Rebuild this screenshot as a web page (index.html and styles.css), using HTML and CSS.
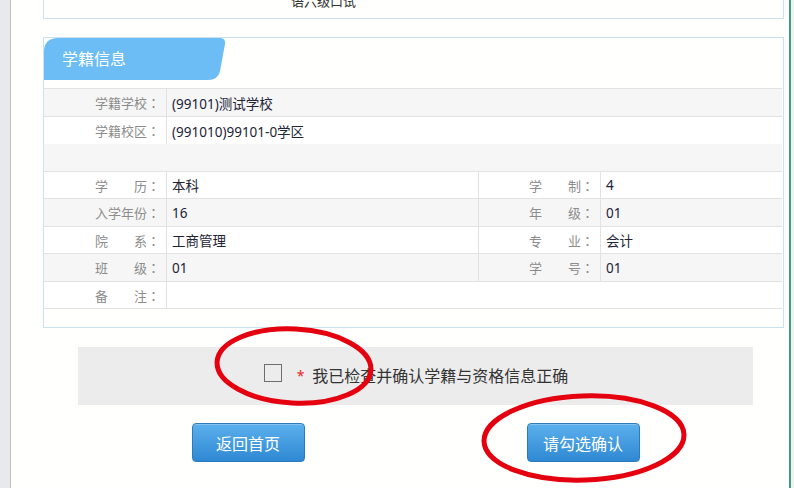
FILE: index.html
```html
<!DOCTYPE html>
<html lang="zh-CN">
<head>
<meta charset="utf-8">
<title>学籍信息确认</title>
<link rel="stylesheet" href="styles.css">
</head>
<body>
<div class="page">
  <div class="side-left"></div>
  <main class="content">
    <div class="prev-box">
      <div class="prev-text">语六级口试</div>
    </div>

    <section class="card">
      <div class="tab">学籍信息</div>
      <div class="info">
        <div class="row gray">
          <div class="lbl">学籍学校<span class="colon">：</span></div>
          <div class="val span3">(99101)测试学校</div>
        </div>
        <div class="row no-line">
          <div class="lbl">学籍校区<span class="colon">：</span></div>
          <div class="val span3">(991010)99101-0学区</div>
        </div>
        <div class="row gray blank"></div>
        <div class="row">
          <div class="lbl">学　　历<span class="colon">：</span></div>
          <div class="val">本科</div>
          <div class="lbl lbl2">学　　制<span class="colon">：</span></div>
          <div class="val">4</div>
        </div>
        <div class="row gray">
          <div class="lbl">入学年份<span class="colon">：</span></div>
          <div class="val">16</div>
          <div class="lbl lbl2">年　　级<span class="colon">：</span></div>
          <div class="val">01</div>
        </div>
        <div class="row">
          <div class="lbl">院　　系<span class="colon">：</span></div>
          <div class="val">工商管理</div>
          <div class="lbl lbl2">专　　业<span class="colon">：</span></div>
          <div class="val">会计</div>
        </div>
        <div class="row gray">
          <div class="lbl">班　　级<span class="colon">：</span></div>
          <div class="val">01</div>
          <div class="lbl lbl2">学　　号<span class="colon">：</span></div>
          <div class="val">01</div>
        </div>
        <div class="row">
          <div class="lbl">备　　注<span class="colon">：</span></div>
          <div class="val span3"></div>
        </div>
      </div>
    </section>

    <div class="confirm">
      <span class="checkbox"></span>
      <span class="star">*</span>
      <span class="confirm-text">我已检查并确认学籍与资格信息正确</span>
    </div>

    <div class="actions">
      <button class="btn">返回首页</button>
      <button class="btn">请勾选确认</button>
    </div>
  </main>
  <div class="side-right"></div>
</div>

<svg class="marks" width="794" height="488" viewBox="0 0 794 488">
  <ellipse cx="294" cy="366" rx="77" ry="37" transform="rotate(3 294 366)" fill="none" stroke="#e4000f" stroke-width="5"/>
  <ellipse cx="584" cy="438" rx="100" ry="42" transform="rotate(-2 584 438)" fill="none" stroke="#e4000f" stroke-width="5"/>
</svg>
</body>
</html>
```

FILE: styles.css
```css
* { box-sizing: border-box; }

html, body {
  margin: 0;
  padding: 0;
  background: #ffffff;
}

body {
  font-family: "Noto Sans", "Noto Sans CJK SC", sans-serif;
  font-size: 13px;
  color: #2c2c3a;
  position: relative;
  width: 794px;
  height: 488px;
  overflow: hidden;
}

.page {
  display: flex;
  height: 488px;
}

.side-left {
  width: 11px;
  flex: none;
  background: #e7e9ec;
  border-right: 1px solid #bdbdbd;
}

.content {
  flex: 1;
  padding: 0 5px 0 32px;
  background: #fffffe;
}

.side-right {
  width: 5px;
  flex: none;
  border-left: 2px solid #3f9e80;
  background: #eef3f1;
}

/* previous (clipped) box */
.prev-box {
  height: 19px;
  border: 1px solid #cfe2ec;
  border-top: none;
  overflow: hidden;
}

.prev-text {
  margin-top: -8px;
  padding-left: 247px;
  line-height: 18px;
  font-size: 13px;
  color: #333;
}

/* card */
.card {
  margin-top: 18px;
  border: 1px solid #cbe1eb;
  padding-bottom: 18px;
}

.tab {
  width: 182px;
  height: 42px;
  padding-left: 18px;
  background: #6cbcf6;
  color: #ffffff;
  font-size: 16px;
  line-height: 42px;
  clip-path: path("M0 14 Q0 0 14 0 H176 Q182 0 181 6 L176 33 Q174 42 164 42 H0 Z");
}

.info {
  margin-top: 8px;
  border-top: 1px solid #e2e2e2;
  margin-right: 1px;
}

.row {
  display: grid;
  grid-template-columns: 123px 311px 123px 1fr;
  height: 28px;
  border-bottom: 1px solid #e2e2e2;
  background: #ffffff;
}

.row:nth-child(even) { height: 27px; }

.row.gray { background: #f6f6f6; }

.row.no-line { border-bottom: none; height: 27px; }

.row.blank { height: 28px; }

.lbl {
  display: flex;
  align-items: center;
  justify-content: flex-end;
  padding-right: 6px;
  color: #8c8c8c;
  border-right: 1px solid #e2e2e2;
  white-space: nowrap;
}

.colon {
  font-family: "Noto Sans CJK TC", "Noto Sans CJK SC", sans-serif;
}

.lbl2 { border-left: 1px solid #e2e2e2; }

.val {
  display: flex;
  align-items: center;
  padding-left: 5px;
  color: #232336;
  white-space: nowrap;
  font-size: 13.5px;
}

.val.span3 { grid-column: 2 / 5; }

/* confirm */
.confirm {
  margin: 19px 0 0 35px;
  width: 675px;
  height: 58px;
  background: #ececec;
  display: flex;
  align-items: center;
  justify-content: center;
  padding-left: 1px;
}

.checkbox {
  width: 18px;
  height: 18px;
  border: 1px solid #6e6e6e;
  margin-top: -6px;
}

.star {
  color: #e42a2a;
  font-size: 14px;
  margin-left: 15px;
  margin-right: 8px;
  margin-top: -2px;
}

.confirm-text {
  font-size: 16px;
  color: #333333;
  margin-top: -2px;
}

/* buttons */
.actions {
  margin: 18px 0 0 35px;
  width: 675px;
  display: flex;
  justify-content: center;
  gap: 222px;
}

.btn {
  width: 113px;
  height: 39px;
  border: 1px solid #2c7bbd;
  border-radius: 4px;
  background: linear-gradient(#5bb0ec, #2f88d3);
  color: #ffffff;
  font-family: "Noto Sans", "Noto Sans CJK SC", sans-serif;
  font-size: 16px;
  padding: 0;
  box-shadow: inset 0 1px 0 rgba(255,255,255,0.25);
}

/* annotation overlay */
.marks {
  position: absolute;
  left: 0;
  top: 0;
  pointer-events: none;
}
```
